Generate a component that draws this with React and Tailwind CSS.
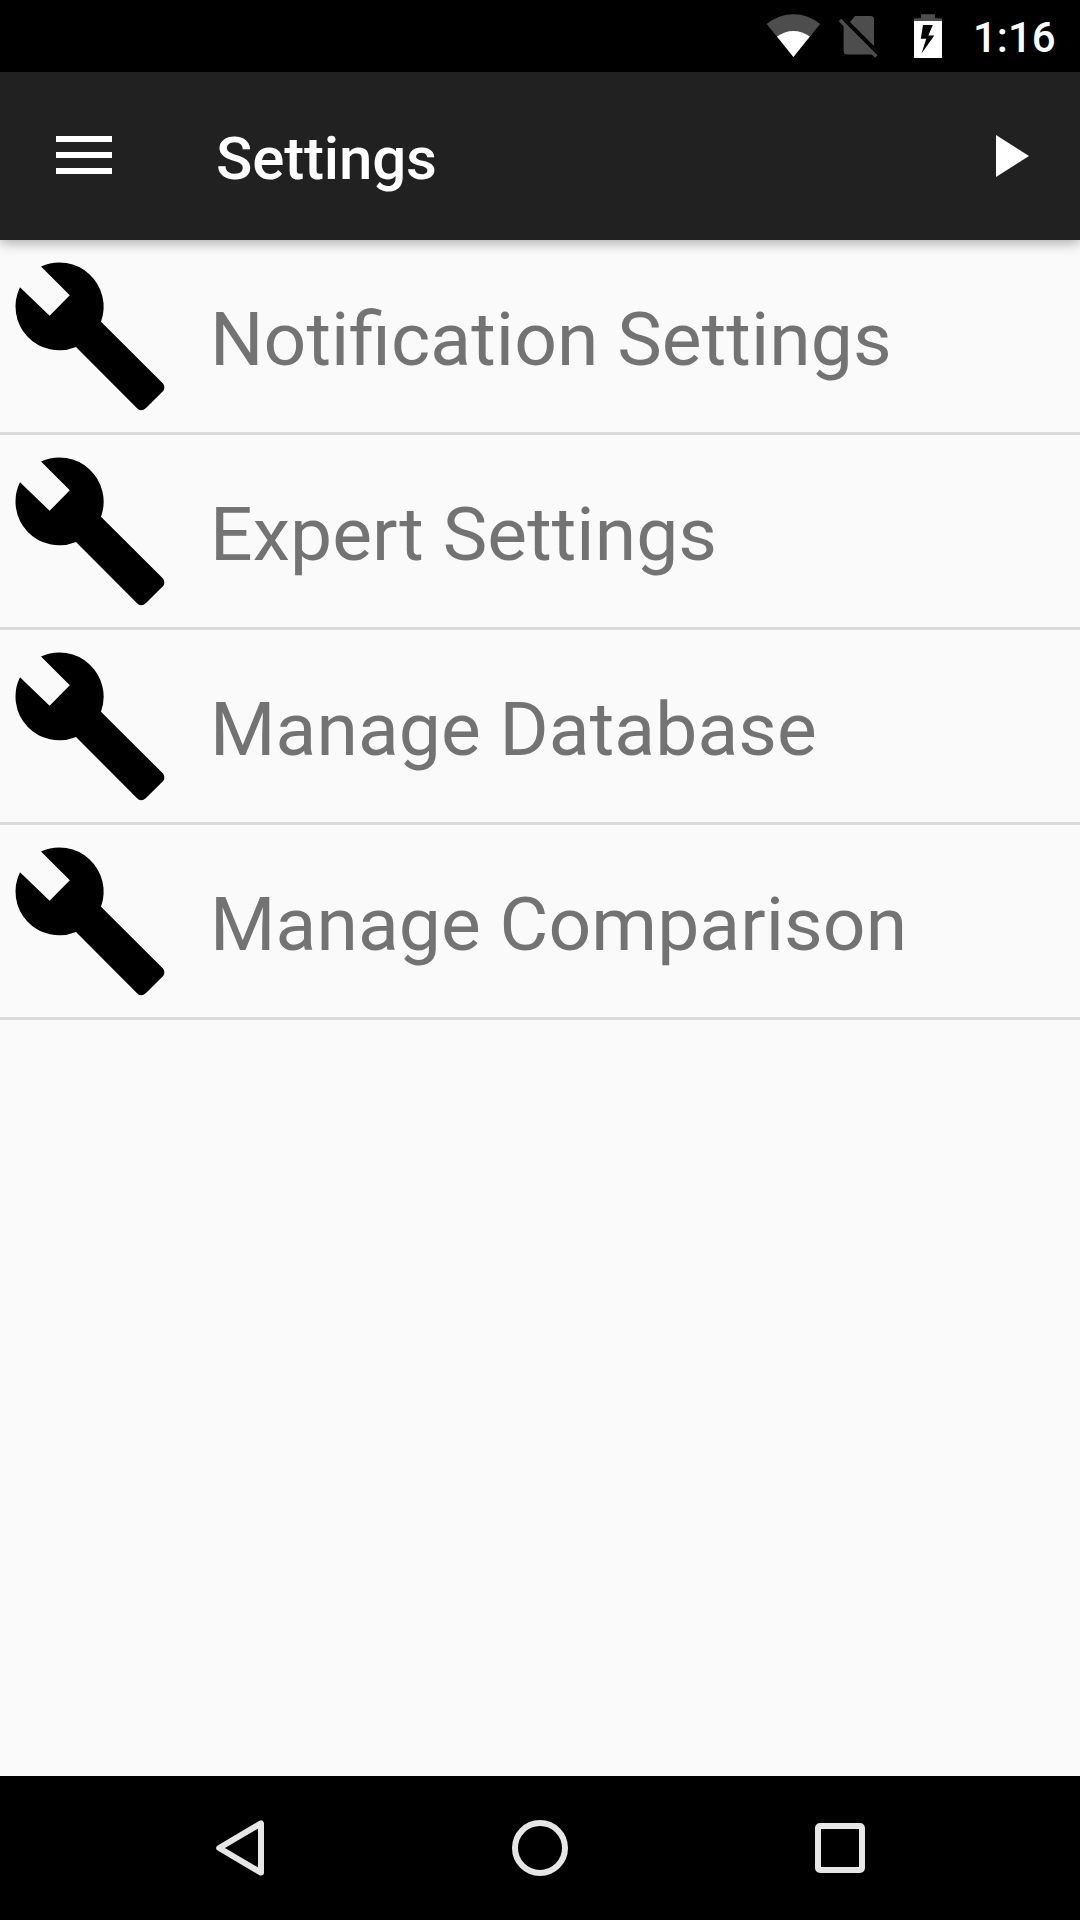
const items = ["Notification Settings", "Expert Settings", "Manage Database", "Manage Comparison"];

function Wrench() {
  return (
    <svg className="block h-[192px] w-[180px] shrink-0" viewBox="0 240 180 192" fill="#000">
      <path d="M41 266.5A44.2 44.2 0 0 1 101 321.7L163 383.5Q165.5 387 163.4 390.8L146 408Q141 412.5 136.8 408L76 347A43.8 43.8 0 0 1 20 287.2L49.6 315.8L69.8 295.2Z" />
    </svg>
  );
}

function StatusBar() {
  return (
    <div className="flex h-[72px] shrink-0 items-start bg-black pl-[766px]">
      <svg className="h-[72px] w-[207px] shrink-0" viewBox="766 0 207 72">
        <path d="M793.4 57L766.6 24Q778.5 14.2 793.4 14.2T820.2 24Z" fill="#4d4d4d" />
        <path d="M793.4 57L777 36.6Q784.5 31 793.4 31T809.8 36.6Z" fill="#fff" />
        <path d="M855 16H870.5Q874 16 874 19.5V46L850 22ZM843.6 24L874 54.6H847.5Q843.6 54.6 843.6 51Z" fill="#4d4d4d" />
        <path d="M839.9 19.9L876.3 56.4" stroke="#4d4d4d" strokeWidth="3.6" />
        <path d="M921 14.3H935V18.3H942V21.3H914V18.3H921Z" fill="#4d4d4d" />
        <path
          d="M914 21H942V58H914ZM923 25L920.8 38.7H926.3L921.5 53.5L934.3 35.5H928.3L932.8 25Z"
          fill="#fff"
          fillRule="evenodd"
        />
      </svg>
      <span className="text-[42px] leading-[76px] font-medium text-white">1:16</span>
    </div>
  );
}

function Toolbar() {
  return (
    <header className="relative flex h-[168px] shrink-0 items-center bg-[#212121] pr-[51px] pb-[2px] pl-14 shadow-[0_3px_12px_rgba(0,0,0,0.32)]">
      <svg className="h-[38px] w-14 shrink-0" viewBox="0 0 56 38" fill="#fff">
        <path d="M0 0H56V6H0ZM0 16H56V22H0ZM0 32H56V38H0Z" />
      </svg>
      <h1 className="ml-[104px] flex-1 pt-[8px] text-[60px] leading-none font-medium tracking-[-0.15px] text-white">
        Settings
      </h1>
      <svg className="mt-[2px] h-[42px] w-[33px] shrink-0" viewBox="0 0 33 42" fill="#fff">
        <path d="M0 0L33 21L0 42Z" />
      </svg>
    </header>
  );
}

function NavigationBar() {
  return (
    <nav className="flex h-36 shrink-0 items-center justify-between bg-black pr-[215px] pl-[216px]">
      <svg className="h-14 w-12" viewBox="0 0 48 56" fill="none" stroke="#e6e6e6" strokeWidth="6" strokeLinejoin="round">
        <path d="M3.2 28L45 3.4V52.6Z" />
      </svg>
      <div className="ml-px size-14 rounded-full border-[6px] border-[#e6e6e6]" />
      <div className="size-[50px] rounded-[5px] border-[6px] border-[#e6e6e6]" />
    </nav>
  );
}

export default function App() {
  return (
    <div className="flex h-[1920px] w-[1080px] flex-col overflow-hidden bg-[#fafafa] font-['Roboto',sans-serif]">
      <StatusBar />
      <Toolbar />
      <main className="flex-1">
        {items.map((t) => (
          <div key={t} className="flex h-[195px] items-center border-b-[3px] border-[#dadada]">
            <Wrench />
            <span className="ml-[30px] pt-[6px] text-[75px] leading-none tracking-[0.08px] text-[#737373] [font-feature-settings:'liga'_1]">
              {t}
            </span>
          </div>
        ))}
      </main>
      <NavigationBar />
    </div>
  );
}
